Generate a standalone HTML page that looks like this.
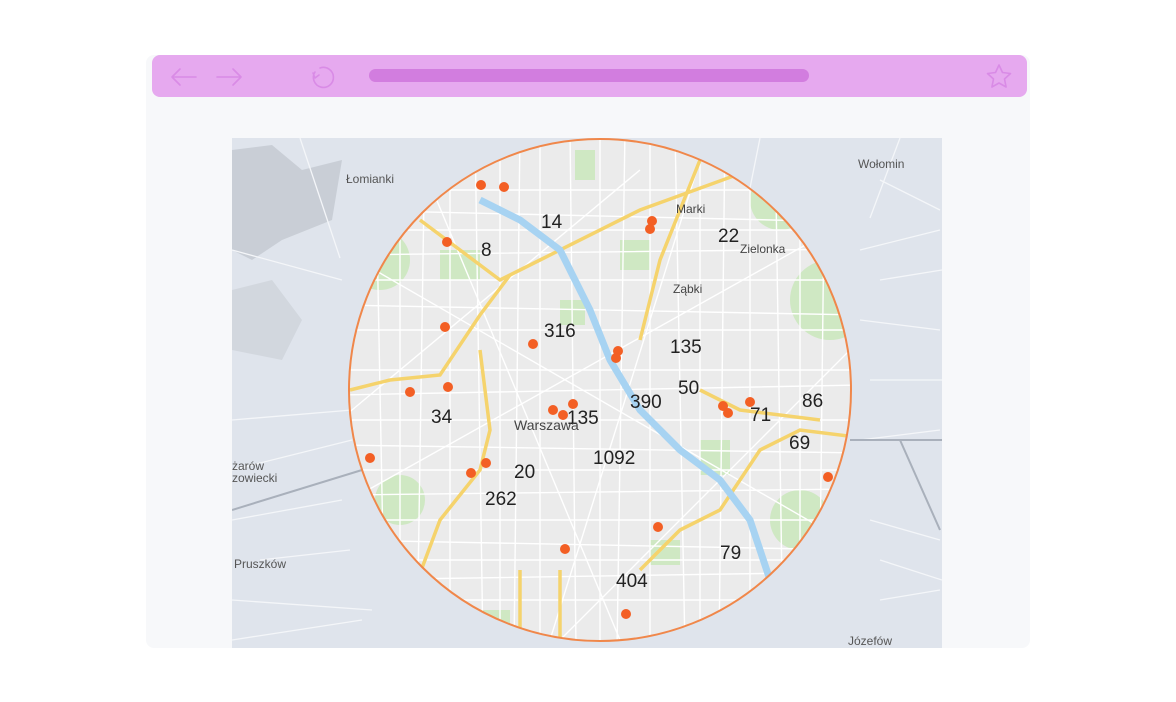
<!DOCTYPE html>
<html><head><meta charset="utf-8"><style>
html,body{margin:0;padding:0;background:#fff;width:1176px;height:702px;overflow:hidden;font-family:"Liberation Sans",sans-serif}
</style></head><body>
<svg width="1176" height="702" viewBox="0 0 1176 702" xmlns="http://www.w3.org/2000/svg" style="position:absolute;left:0;top:0">
<defs>
<clipPath id="m"><rect x="232" y="138" width="710" height="510"/></clipPath>
<clipPath id="c"><circle cx="600" cy="390" r="251"/></clipPath>
</defs>
<rect x="146" y="55" width="884" height="593" rx="8" fill="#f7f8fa"/>
<rect x="152" y="55" width="875" height="42" rx="8" fill="#e6a9ef"/>
<rect x="369" y="69" width="440" height="13" rx="6.5" fill="#d27ddf"/>
<g fill="none" stroke="#d98be6" stroke-width="1.6" stroke-linecap="round" stroke-linejoin="round">
<path d="M196 77H172M180 69l-8 8 8 8"/>
<path d="M217 77h24M233 69l8 8-8 8"/>
<path d="M320 68a10 10 0 1 1-5 4M313 73l2 5 4-3"/>
<path d="M999 65l3.5 7.5 8 1-6 5.5 1.6 8-7.1-4-7.1 4 1.6-8-6-5.5 8-1z"/>
</g>
<g clip-path="url(#m)">
<rect x="232" y="138" width="710" height="510" fill="#dfe4ec"/>
<path d="M232 150l40 -5 30 25 40 -10 -10 60 -50 20 -30 20 -20 -10z" fill="#c9ced6"/>
<path d="M232 290l40 -10 30 40 -20 40 -50 -10z" fill="#d2d7de"/>
<g stroke="#f4f6f9" stroke-width="1.3" fill="none">
<path d="M232 470l120 -30M232 520l110 -20M260 560l90 -10M232 600l140 10M880 180l60 30M860 250l80 -20M860 320l80 10M860 440l80 -10M870 520l70 20M880 600l60 -10M300 138l40 120M760 138l-20 100M900 138l-30 80M232 420l120 -10M232 250l110 30M880 280l62 -10M870 380l72 0M232 640l130 -20M880 560l62 20"/>
</g>
<path d="M232 510l130 -40" stroke="#a9b0bb" stroke-width="2" fill="none"/>
<path d="M850 440l92 0M900 440l40 90" stroke="#a9b0bb" stroke-width="2" fill="none"/>
<g font-size="12" fill="#555">
<text x="346" y="183">Łomianki</text><text x="858" y="168">Wołomin</text>
<text x="234" y="568">Pruszków</text><text x="848" y="645">Józefów</text>
<text x="232" y="470">żarów</text><text x="232" y="482">zowiecki</text>
</g>
<g clip-path="url(#c)">
<rect x="340" y="130" width="520" height="520" fill="#ebebeb"/>
<g fill="#cfe8c3">
<circle cx="380" cy="260" r="30"/><circle cx="830" cy="300" r="40"/><circle cx="780" cy="200" r="30"/>
<rect x="620" y="240" width="30" height="30"/><rect x="700" y="440" width="30" height="35"/>
<rect x="440" y="250" width="40" height="30"/><rect x="480" y="610" width="30" height="30"/>
<circle cx="400" cy="500" r="25"/><circle cx="800" cy="520" r="30"/><rect x="560" y="300" width="25" height="25"/>
<rect x="650" y="540" width="30" height="25"/><rect x="575" y="150" width="20" height="30"/>
</g>
<g stroke="#fff" stroke-width="1.4" fill="none">
<path d="M340 330h520M340 370h520M340 420h520M340 470h520M340 520h520M340 280h520M340 230h520M340 560h520M340 600h520M340 190h520"/>
<path d="M340 305l520 10M340 395l520 -10M340 445l520 8M340 495l520 -6M340 255l520 -6M340 210l520 12M340 540l520 10M340 580l520 -8"/>
<path d="M400 130v520M450 130v520M500 130v520M540 130v520M600 130v520M650 130v520M700 130v520M750 130v520M800 130v520"/>
<path d="M375 130l10 520M425 130l-8 520M475 130l8 520M520 130l-6 520M570 130l6 520M625 130l-8 520M675 130l10 520M725 130l-6 520M775 130l8 520M825 130l-6 520"/>
<path d="M340 250l520 300M350 500l500 -280M420 160l200 480M700 160l-150 480M340 420l300 -250M560 640l300 -300"/>
</g>
<g stroke="#f5d36c" stroke-width="3.5" fill="none">
<path d="M420 220l80 60 40 -20 100 -50 110 -40 80 -20"/>
<path d="M350 390l40 -10 50 -5 40 -60 30 -40"/>
<path d="M410 600l30 -80 40 -50 10 -40 -10 -80"/>
<path d="M700 160l-40 100 -20 80"/>
<path d="M520 650v-80M560 650v-80"/>
<path d="M640 570l40 -40 40 -20 40 -60 40 -20 80 10"/>
<path d="M820 420l-80 -10 -40 -20"/>
</g>
<path d="M480 200l40 20 40 30 30 60 20 50 30 50 40 40 40 30 30 40 20 60" stroke="#a7d3f2" stroke-width="7" fill="none"/>
</g>
<circle cx="600" cy="390" r="251" fill="none" stroke="#f0874a" stroke-width="2"/>
<g fill="#f35f24">
<circle cx="481" cy="185" r="5"/><circle cx="504" cy="187" r="5"/><circle cx="447" cy="242" r="5"/>
<circle cx="652" cy="221" r="5"/><circle cx="650" cy="229" r="5"/><circle cx="445" cy="327" r="5"/>
<circle cx="533" cy="344" r="5"/><circle cx="618" cy="351" r="5"/><circle cx="616" cy="358" r="5"/>
<circle cx="410" cy="392" r="5"/><circle cx="448" cy="387" r="5"/><circle cx="553" cy="410" r="5"/>
<circle cx="573" cy="404" r="5"/><circle cx="563" cy="415" r="5"/><circle cx="723" cy="406" r="5"/>
<circle cx="728" cy="413" r="5"/><circle cx="750" cy="402" r="5"/><circle cx="370" cy="458" r="5"/>
<circle cx="486" cy="463" r="5"/><circle cx="471" cy="473" r="5"/><circle cx="828" cy="477" r="5"/>
<circle cx="658" cy="527" r="5"/><circle cx="565" cy="549" r="5"/><circle cx="626" cy="614" r="5"/>
</g>
<g font-size="19" fill="#222">
<text x="541" y="228">14</text><text x="481" y="256">8</text><text x="718" y="242">22</text>
<text x="544" y="337">316</text><text x="670" y="353">135</text><text x="678" y="394">50</text>
<text x="630" y="408">390</text><text x="567" y="424">135</text><text x="750" y="421">71</text>
<text x="802" y="407">86</text><text x="789" y="449">69</text><text x="431" y="423">34</text>
<text x="593" y="464">1092</text><text x="514" y="478">20</text><text x="485" y="505">262</text>
<text x="720" y="559">79</text><text x="616" y="587">404</text>
</g>
<g font-size="14" fill="#444">
<text x="514" y="430">Warszawa</text><text x="676" y="213" font-size="12">Marki</text>
<text x="740" y="253" font-size="12">Zielonka</text><text x="673" y="293" font-size="12">Ząbki</text>
</g>
</g>
</svg>
</body></html>
